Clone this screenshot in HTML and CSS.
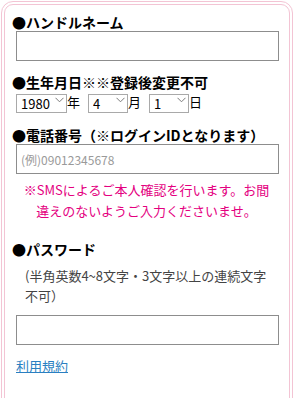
FILE: index.html
```html
<!DOCTYPE html>
<html>
  <head>
    <meta charset="utf-8">
    <meta name="viewport" content="width=device-width, initial-scale=1.0">
    <title>会員登録</title>
    <link rel="stylesheet" href="styles.css">
  </head>
  <body>
    <div class="frame">
      <form class="entry" onsubmit="return false">
        <h3 class="label">●ハンドルネーム</h3>
        <input type="text" class="text-input" name="handle">

        <h3 class="label label-birth">●生年月日※※登録後変更不可</h3>
        <div class="date-row">
          <span class="sel sel-year">
            <select name="year"><option>1980</option></select>
            <svg class="chev" width="9" height="6" viewBox="0 0 9 6"><path d="M0.5 0.8 L4.5 4.8 L8.5 0.8" fill="none" stroke="#7a7a7a" stroke-width="1"/></svg>
          </span>
          <span class="unit">年</span>
          <span class="sel">
            <select name="month"><option>4</option></select>
            <svg class="chev" width="9" height="6" viewBox="0 0 9 6"><path d="M0.5 0.8 L4.5 4.8 L8.5 0.8" fill="none" stroke="#7a7a7a" stroke-width="1"/></svg>
          </span>
          <span class="unit">月</span>
          <span class="sel">
            <select name="day"><option>1</option></select>
            <svg class="chev" width="9" height="6" viewBox="0 0 9 6"><path d="M0.5 0.8 L4.5 4.8 L8.5 0.8" fill="none" stroke="#7a7a7a" stroke-width="1"/></svg>
          </span>
          <span class="unit">日</span>
        </div>

        <h3 class="label label-tel">●電話番号（※ログインIDとなります）</h3>
        <input type="tel" class="text-input" name="tel" placeholder="(例)09012345678">
        <p class="sms-note">※SMSによるご本人確認を行います。お間違えのないようご入力くださいませ。</p>

        <h3 class="label label-pass">●パスワード</h3>
        <p class="pass-note">(半角英数4~8文字・3文字以上の連続文字不可）</p>
        <input type="password" class="text-input pass-input" name="password">

        <a href="#" class="terms">利用規約</a>
      </form>
    </div>
  </body>
</html>
```

FILE: styles.css
```css
body, html {
  margin: 0;
  background: #fff;
  font-family: "Noto Sans CJK JP", "Noto Sans", sans-serif;
  color: #000;
}
.frame {
  margin: 1px 2px 0 1px;
  border: 4px double #f3c4d4;
  border-radius: 12px;
  padding: 8px 10px 40px 7px;
  min-height: 400px;
}
.entry {
  display: flex;
  flex-direction: column;
  align-items: flex-start;
}
.label {
  margin: 0;
  font-size: 14px;
  line-height: 18px;
  font-weight: 700;
  white-space: nowrap;
}
.label-birth {
  margin-top: 12px;
}
.label-tel {
  margin-top: 15px;
}
.label-pass {
  margin-top: 19px;
}
.text-input {
  box-sizing: border-box;
  margin: 0 0 0 4px;
  width: 263px;
  height: 30px;
  border: 1px solid #8d8d8d;
  border-radius: 0;
  padding: 0 4px;
  font-family: inherit;
  font-size: 12px;
  outline: none;
}
.text-input::placeholder {
  color: #9a9a9a;
}
.date-row {
  display: flex;
  align-items: center;
  margin: 1px 0 0 4px;
  height: 19px;
}
.sel {
  position: relative;
  display: inline-block;
}
.sel select {
  appearance: none;
  -webkit-appearance: none;
  box-sizing: border-box;
  width: 40px;
  height: 19px;
  margin: 0;
  padding: 0 0 0 4px;
  border: 1px solid #a9a9a9;
  border-radius: 0;
  background: #fff;
  font-family: inherit;
  font-size: 13px;
  line-height: 17px;
  color: #000;
}
.sel-year select {
  width: 51px;
}
.chev {
  position: absolute;
  right: 3px;
  top: 7px;
  pointer-events: none;
}
.unit {
  font-size: 13px;
  line-height: 19px;
  margin: 0 8px 0 0;
}
.unit:last-child {
  margin-right: 0;
}
.sms-note {
  box-sizing: border-box;
  margin: 5px 0 0 4px;
  width: 263px;
  padding: 0 8px 0 6px;
  font-size: 13px;
  line-height: 21px;
  color: #e4007f;
  text-align: center;
}
.pass-note {
  box-sizing: border-box;
  margin: 8px 0 0 4px;
  width: 263px;
  padding: 0 9px;
  font-size: 13px;
  line-height: 20px;
  color: #444;
}
.pass-input {
  margin-top: 9px;
}
.terms {
  margin: 12px 0 0 4px;
  font-size: 13px;
  line-height: 18px;
  color: #2a7fc1;
  text-decoration: underline;
}
```
